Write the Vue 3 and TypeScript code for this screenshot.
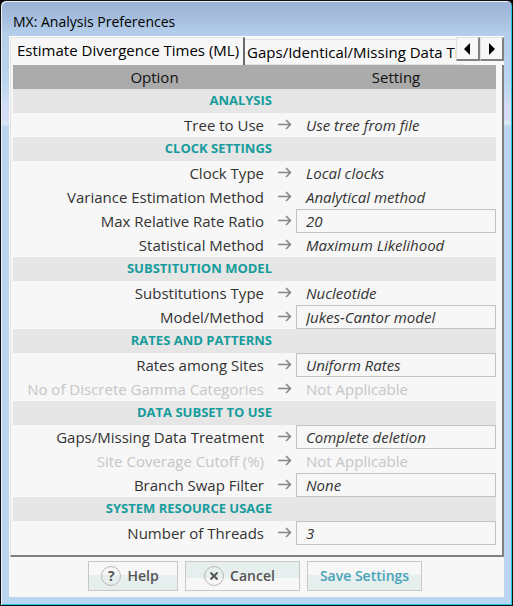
<script setup lang="ts">
import { ref } from 'vue'

type Kind = 'static' | 'text' | 'select' | 'disabled'

interface Option {
  id: string
  label: string
  value: string
  kind: Kind
  choices?: string[]
}

interface Section {
  title: string
  options: Option[]
}

const sections = ref<Section[]>([
  {
    title: 'ANALYSIS',
    options: [{ id: 'tree', label: 'Tree to Use', value: 'Use tree from file', kind: 'static' }],
  },
  {
    title: 'CLOCK SETTINGS',
    options: [
      { id: 'clock', label: 'Clock Type', value: 'Local clocks', kind: 'static' },
      { id: 'variance', label: 'Variance Estimation Method', value: 'Analytical method', kind: 'static' },
      { id: 'ratio', label: 'Max Relative Rate Ratio', value: '20', kind: 'text' },
      { id: 'statistical', label: 'Statistical Method', value: 'Maximum Likelihood', kind: 'static' },
    ],
  },
  {
    title: 'SUBSTITUTION MODEL',
    options: [
      { id: 'substitution', label: 'Substitutions Type', value: 'Nucleotide', kind: 'static' },
      { id: 'model', label: 'Model/Method', value: 'Jukes-Cantor model', kind: 'select', choices: ['Jukes-Cantor model'] },
    ],
  },
  {
    title: 'RATES AND PATTERNS',
    options: [
      { id: 'rates', label: 'Rates among Sites', value: 'Uniform Rates', kind: 'select', choices: ['Uniform Rates'] },
      { id: 'gamma', label: 'No of Discrete Gamma Categories', value: 'Not Applicable', kind: 'disabled' },
    ],
  },
  {
    title: 'DATA SUBSET TO USE',
    options: [
      { id: 'gaps', label: 'Gaps/Missing Data Treatment', value: 'Complete deletion', kind: 'select', choices: ['Complete deletion'] },
      { id: 'cutoff', label: 'Site Coverage Cutoff (%)', value: 'Not Applicable', kind: 'disabled' },
      { id: 'branch', label: 'Branch Swap Filter', value: 'None', kind: 'select', choices: ['None'] },
    ],
  },
  {
    title: 'SYSTEM RESOURCE USAGE',
    options: [{ id: 'threads', label: 'Number of Threads', value: '3', kind: 'text' }],
  },
])
</script>

<template>
  <main class="window">
    <h1 class="title">MX: Analysis Preferences</h1>
    <div class="client">
      <div class="tabs">
        <button class="tab active" type="button">Estimate Divergence Times (ML)</button>
        <button class="tab next" type="button">Gaps/Identical/Missing Data Tr</button>
        <div class="scroll">
          <button class="step" type="button" aria-label="Previous tab">
            <svg width="8" height="12" viewBox="0 0 8 12"><path d="M6 0v12L0 6z" /></svg>
          </button>
          <button class="step" type="button" aria-label="Next tab">
            <svg width="8" height="12" viewBox="0 0 8 12"><path d="M1 0v12l6-6z" /></svg>
          </button>
        </div>
      </div>

      <section class="panel">
        <table class="grid">
          <colgroup>
            <col />
            <col class="setting-col" />
          </colgroup>
          <thead>
            <tr>
              <th>Option</th>
              <th>Setting</th>
            </tr>
          </thead>
          <tbody v-for="section in sections" :key="section.title">
            <tr class="section">
              <th>{{ section.title }}</th>
              <td></td>
            </tr>
            <tr v-for="option in section.options" :key="option.id" :class="{ off: option.kind === 'disabled' }">
              <td>
                <div class="name">
                  <label :for="option.id">{{ option.label }}</label>
                  <svg class="arrow" width="14" height="12" viewBox="0 0 14 12" aria-hidden="true">
                    <path d="M0 5.5h12.5M8 1L12.5 5.5 8 10" />
                  </svg>
                </div>
              </td>
              <td>
                <input v-if="option.kind === 'text'" :id="option.id" v-model="option.value" class="field" type="text" />
                <select v-else-if="option.kind === 'select'" :id="option.id" v-model="option.value" class="field">
                  <option v-for="choice in option.choices" :key="choice">{{ choice }}</option>
                </select>
                <output v-else :id="option.id" class="value">{{ option.value }}</output>
              </td>
            </tr>
          </tbody>
        </table>
      </section>

      <footer class="actions">
        <button class="action help" type="button">
          <span class="badge">?</span>Help
        </button>
        <button class="action cancel" type="button">
          <span class="badge">
            <svg width="8" height="8" viewBox="0 0 8 8"><path d="M0.5 0.5l7 7M7.5 0.5l-7 7" /></svg>
          </span>Cancel
        </button>
        <button class="action save" type="button">Save Settings</button>
      </footer>
    </div>
  </main>
</template>

<style>
body {
  background: #000;
}
</style>

<style scoped>
* {
  box-sizing: border-box;
}

.window {
  display: flex;
  flex-direction: column;
  min-height: 100vh;
  padding: 0 8px 8px;
  border: 1px solid #111;
  border-radius: 6px 6px 0 0;
  background: linear-gradient(#9db4d8 0, #a4bbdc 14px, #b4cfeb 34px, #bad5ef 80px, #d4dcf5 106px, #d4dcf5 118px, #dceaf7 122px, #bad5ef 126px, #bad5ef 100%);
  box-shadow: inset 1px 1px #e8f0fa, inset -1px -1px #20c8e8;
  font-family: "Open Sans", sans-serif;
  font-size: 15px;
  line-height: 24px;
  color: #333;
}

button,
input,
select {
  margin: 0;
  font: inherit;
  color: inherit;
}

.title {
  margin: 0;
  padding: 9px 4px 2px;
  font-size: 14px;
  font-weight: 400;
  color: #000;
}

.client {
  display: flex;
  flex: 1;
  flex-direction: column;
  background: #f7f7f7;
  border-top: 1px solid #fff;
}

.tabs {
  position: relative;
  display: flex;
  align-items: flex-end;
  height: 28px;
  overflow: hidden;
}

.tab {
  flex: none;
  border: 0;
  background: #f7f7f7;
  color: #000;
  white-space: nowrap;
}

.tab.active {
  height: 28px;
  margin-left: 1px;
  padding: 0 4px 4px 6px;
  border: solid #e3e3e3;
  border-width: 1px 0 0 1px;
  border-right: 2px solid #696969;
}

.tab.next {
  height: 26px;
  padding: 0 2px 2px;
  border-top: 1px solid #e3e3e3;
  border-bottom: 1px solid #e3e3e3;
}

.scroll {
  position: absolute;
  top: 0;
  right: 0;
  display: flex;
}

.step {
  display: flex;
  align-items: center;
  justify-content: center;
  width: 24px;
  height: 24px;
  padding: 0;
  border: solid;
  border-width: 1px 2px 2px 1px;
  border-color: #e3e3e3 #808080 #808080 #e3e3e3;
  background: #f7f7f7;
}

.panel {
  margin-left: 1px;
  padding: 0 6px 10px 2px;
  border: solid;
  border-width: 0 2px 2px 1px;
  border-color: #e3e3e3 #808080 #808080 #e3e3e3;
}

.grid {
  width: 100%;
  table-layout: fixed;
  border-spacing: 0;
}

.setting-col {
  width: 200px;
}

.grid th,
.grid td {
  height: 24px;
  padding: 0;
}

thead th {
  background: #ababab;
  color: #111;
  font-weight: 400;
}

.section th,
.section td {
  background: #e6e6e6;
}

.grid .section th {
  padding: 0 24px 2px 0;
  color: #169c9c;
  font-size: 13px;
  font-weight: 700;
  line-height: 22px;
  text-align: right;
}

.name {
  display: flex;
  align-items: center;
  justify-content: flex-end;
  gap: 14px;
  padding-right: 4px;
  white-space: nowrap;
}

.arrow {
  fill: none;
  stroke: #858585;
  stroke-width: 1.5;
}

.field {
  display: block;
  width: 100%;
  height: 24px;
  padding: 0 9px;
  border: 1px solid #c3c3c3;
  border-radius: 0;
  outline: 0;
  appearance: none;
  background: #f7f7f7;
  font-style: italic;
  line-height: 22px;
}

.value {
  display: block;
  padding-left: 10px;
  font-style: italic;
}

.off {
  color: #c6c6c6;
}

.off .value {
  font-style: normal;
}

.actions {
  display: flex;
  justify-content: center;
  gap: 7px;
  padding: 4px 3px 6px 0;
}

.action {
  display: flex;
  align-items: center;
  justify-content: center;
  gap: 6px;
  width: 115px;
  height: 30px;
  padding: 0;
  border: 1px solid #c8c8c8;
  background: linear-gradient(#f7f7f7 45%, #e6efee 45%);
  color: #555;
  font-size: 14px;
  font-weight: 600;
}

.help {
  width: 90px;
  padding-right: 6px;
}

.cancel {
  padding-right: 6px;
  background: linear-gradient(#e6efee 58%, #f7f7f7 58%);
}

.save {
  color: #49a3b9;
}

.badge {
  display: flex;
  align-items: center;
  justify-content: center;
  width: 20px;
  height: 20px;
  border: 1px solid #b8b8b8;
  border-radius: 50%;
  font-weight: 700;
}

.badge svg {
  stroke: #555;
  stroke-width: 2;
}
</style>
